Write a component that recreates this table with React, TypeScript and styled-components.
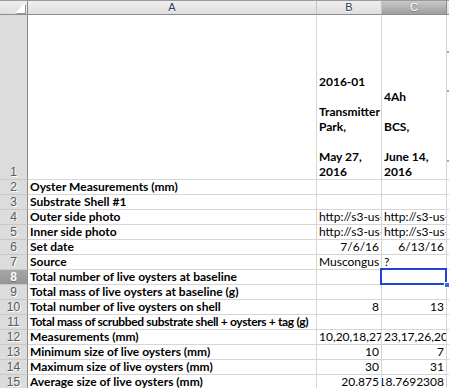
import React from "react";
import styled, { createGlobalStyle, css } from "styled-components";

const GlobalStyle = createGlobalStyle`
  html, body { margin: 0; padding: 0; background: #ffffff; overflow: hidden; }
  body { font-family: "Lato", "Open Sans", sans-serif; }
`;

const Sheet = styled.div`
  display: grid;
  grid-template-columns: 28px 289px 65px 65px 1fr;
  grid-template-rows: 15px 165px;
  grid-auto-rows: 15px;
  width: 449px;
  height: 388px;
  overflow: hidden;
  background: #ffffff;
`;

const Corner = styled.div`
  position: relative;
  box-sizing: border-box;
  background: linear-gradient(#eeeeee, #dedede);
  border-top: 1px solid #9a9a9a;
  border-right: 1px solid #8c8c8c;
  border-bottom: 1px solid #8c8c8c;
  &::after {
    content: "";
    position: absolute;
    right: 2px;
    bottom: 1px;
    width: 0;
    height: 0;
    border-left: 10px solid transparent;
    border-bottom: 10px solid #ffffff;
    filter: drop-shadow(1px 1px 0 #9a9a9a);
  }
`;

const ColHead = styled.div<{ $selected?: boolean; $last?: boolean }>`
  box-sizing: border-box;
  display: flex;
  align-items: center;
  justify-content: center;
  border-top: 1px solid #9a9a9a;
  border-bottom: 1px solid #8c8c8c;
  border-right: ${(p) => (p.$last ? "none" : "1px solid #c4c4c4")};
  font-family: "Liberation Sans", "Lato", sans-serif;
  font-size: 11px;
  line-height: 13px;
  ${(p) =>
    p.$selected
      ? css`
          background: linear-gradient(#c9c9c9, #9d9d9d);
          color: #ffffff;
          text-shadow: 0 1px 0 #7a7a7a;
          border-right-color: #8c8c8c;
        `
      : css`
          background: linear-gradient(#f0f0f0, #dddddd);
          color: #2b3a55;
          text-shadow: 0 1px 0 #ffffff;
        `}
`;

const RowHead = styled.div<{ $selected?: boolean }>`
  box-sizing: border-box;
  display: flex;
  align-items: flex-end;
  justify-content: center;
  border-right: 1px solid #8c8c8c;
  border-bottom: 1px solid #c8c8c8;
  font-family: "Liberation Sans", "Lato", sans-serif;
  font-size: 12px;
  line-height: 14px;
  ${(p) =>
    p.$selected
      ? css`
          background: linear-gradient(#a6a6a6, #959595);
          color: #ffffff;
          font-weight: bold;
          text-shadow: 0 1px 0 #707070;
        `
      : css`
          background: #dcdcdc;
          color: #5a5a5a;
          text-shadow: 1px 1px 0 #ffffff;
        `}
`;

const Cell = styled.div<{
  $bold?: boolean;
  $align?: "left" | "right";
  $tall?: boolean;
  $selected?: boolean;
  $last?: boolean;
  $clip?: boolean;
  $tight?: boolean;
}>`
  position: relative;
  box-sizing: border-box;
  display: flex;
  align-items: flex-end;
  justify-content: ${(p) => (p.$align === "right" ? "flex-end" : "flex-start")};
  padding: 0 2px 0 2px;
  border-right: ${(p) => (p.$last ? "none" : "1px solid #d6d6d6")};
  border-bottom: 1px solid #d6d6d6;
  font-family: "Lato", "Open Sans", sans-serif;
  font-size: 12px;
  line-height: ${(p) => (p.$tall ? "15px" : "14px")};
  font-weight: ${(p) => (p.$bold ? 700 : 400)};
  letter-spacing: ${(p) => (p.$tight ? "-0.35px" : "normal")};
  color: #000000;
  white-space: ${(p) => (p.$tall ? "pre" : "nowrap")};
  overflow: ${(p) => (p.$clip ? "hidden" : "visible")};
  ${(p) =>
    p.$selected &&
    css`
      &::after {
        content: "";
        position: absolute;
        left: -2px;
        top: -2px;
        right: -1px;
        bottom: -1px;
        border: 2px solid #2243d4;
        pointer-events: none;
      }
      &::before {
        content: "";
        position: absolute;
        right: -4px;
        bottom: -4px;
        width: 4px;
        height: 4px;
        background: #2f6fe0;
        border: 1px solid #ffffff;
        z-index: 2;
      }
    `}
`;

const CommentMarks = styled.svg`
  position: absolute;
  left: 0;
  top: 0;
`;

type Row = {
  a: string;
  b?: string;
  c?: string;
  bAlign?: "left" | "right";
  cAlign?: "left" | "right";
  tight?: boolean;
};

const rows: Row[] = [
  { a: "Oyster Measurements (mm)" },
  { a: "Substrate Shell #1" },
  { a: "Outer side photo", b: "http://s3-us-west", c: "http://s3-us-west" },
  { a: "Inner side photo", b: "http://s3-us-west", c: "http://s3-us-west" },
  { a: "Set date", b: "7/6/16", c: "6/13/16", bAlign: "right", cAlign: "right" },
  { a: "Source", b: "Muscongus Bay", c: "?" },
  { a: "Total number of live oysters at baseline" },
  { a: "Total mass of live oysters at baseline (g)" },
  { a: "Total number of live oysters on shell", b: "8", c: "13", bAlign: "right", cAlign: "right" },
  { a: "Total mass of scrubbed substrate shell + oysters + tag (g)", tight: true },
  { a: "Measurements (mm)", b: "10,20,18,27,30,20", c: "23,17,26,20,19,15" },
  { a: "Minimum size of live oysters (mm)", b: "10", c: "7", bAlign: "right", cAlign: "right" },
  { a: "Maximum size of live oysters (mm)", b: "30", c: "31", bAlign: "right", cAlign: "right" },
  { a: "Average size of live oysters (mm)", b: "20.875", c: "18.7692308", bAlign: "right", cAlign: "right" },
];

export default function App() {
  return (
    <>
      <GlobalStyle />
      <Sheet>
        <Corner />
        <ColHead>A</ColHead>
        <ColHead>B</ColHead>
        <ColHead $selected>C</ColHead>
        <ColHead $last />

        <RowHead>1</RowHead>
        <Cell $tall />
        <Cell $tall $bold $clip>{"2016-01\n\nTransmitter\nPark,\n\nMay 27,\n2016"}</Cell>
        <Cell $tall $bold $clip>{"4Ah\n\nBCS,\n\nJune 14,\n2016"}</Cell>
        <Cell $tall $last>
          <CommentMarks width="3" height="165" viewBox="0 0 3 165">
            <rect x="0" y="36" width="2" height="2" fill="#f0a030" />
            <rect x="0" y="75" width="2" height="2" fill="#f0a030" />
            <rect x="0" y="145" width="2" height="2" fill="#f0a030" />
          </CommentMarks>
        </Cell>

        {rows.map((r, i) => {
          const n = i + 2;
          return (
            <React.Fragment key={n}>
              <RowHead $selected={n === 8}>{n}</RowHead>
              <Cell $bold $tight={r.tight}>{r.a}</Cell>
              <Cell $clip $align={r.bAlign}>{r.b}</Cell>
              <Cell $clip={!!r.c} $align={r.cAlign} $selected={n === 8}>{r.c}</Cell>
              <Cell $last />
            </React.Fragment>
          );
        })}
      </Sheet>
    </>
  );
}
